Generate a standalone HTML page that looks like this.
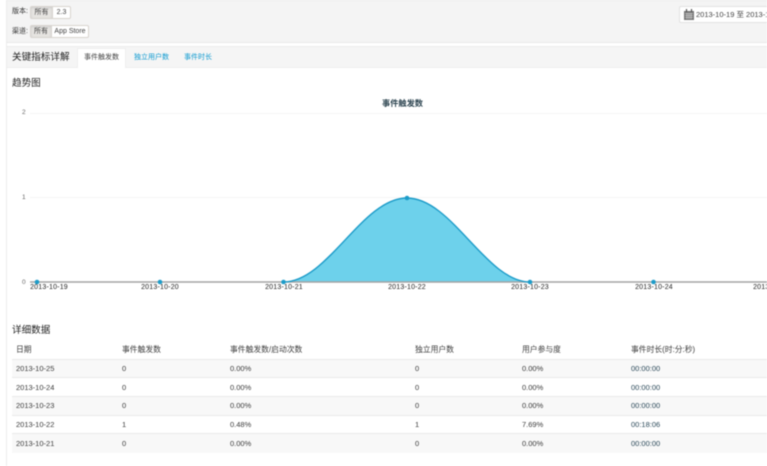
<!DOCTYPE html>
<html lang="zh">
<head>
<meta charset="utf-8">
<style>
html,body{margin:0;padding:0;background:#fff}
#p{position:relative;width:767px;height:466px;overflow:hidden;background:#fff;font-family:"Liberation Sans","Noto Sans CJK SC",sans-serif;color:#444;filter:blur(.45px)}
#p div{position:absolute;white-space:nowrap;box-sizing:border-box}
.t{font-size:7px;line-height:10px;color:#444}
.btn{height:13px;font-size:7px;line-height:11px;text-align:center;border:1px solid #d8d4cf;color:#444}
.on{background:#e6e4e1;border-radius:2px 0 0 2px;box-shadow:inset 0 1px 2px #ccc}
.off{background:#fff;border-left:0;border-radius:0 2px 2px 0}
.row{left:12px;width:755px;height:19px;border-bottom:1px solid #eaeaea}
.s{background:#f8f8f8}
.c{font-size:7.5px;line-height:10px;color:#3c3c3c}
.h{font-size:7.8px;line-height:10px;color:#3c3c3c;top:345px}
.x{font-size:7px;line-height:9px;color:#222;top:283px;letter-spacing:.2px;transform:translateX(-50%)}
.y{font-size:6.5px;line-height:8px;color:#666;left:22px}
.ttl{left:12px;font-size:9.6px;line-height:13px;color:#222}
</style>
</head>
<body>
<div id="p">
  <div style="left:6px;top:0;width:761px;height:43px;background:#f4f4f4;border-top:1px solid #ececec;border-bottom:1px solid #e8e8e8"></div>
  <div style="left:6px;top:46px;width:761px;height:22px;background:#f5f5f5;border-top:1px solid #ececec;border-bottom:1px solid #eee"></div>
  <div style="left:6px;top:0;width:1px;height:466px;background:#ececec"></div>

  <div class="t" style="left:12px;top:7px;color:#333">版本:</div>
  <div class="btn on" style="left:30px;top:6px;width:23px">所有</div>
  <div class="btn off" style="left:53px;top:6px;width:18px">2.3</div>
  <div class="t" style="left:12px;top:26.500px;color:#333">渠道:</div>
  <div class="btn on" style="left:30px;top:25px;width:22px">所有</div>
  <div class="btn off" style="left:52px;top:25px;width:37px">App Store</div>

  <div style="left:679px;top:6px;width:100px;height:17px;background:#fff;border:1px solid #e2e2e2;border-radius:2px"></div>
  <svg style="position:absolute;left:684px;top:9px" width="10" height="11" viewBox="0 0 10 11"><path d="M0 2h10v9H0z" fill="#777"/><path d="M2.500 0v3M7.500 0v3" stroke="#555" stroke-width="1.2"/><path d="M1 4.500h8M1 6.500h8M1 8.500h8M3 4v6M5 4v6M7 4v6" stroke="#ddd" stroke-width=".6"/></svg>
  <div style="left:696px;top:9px;font-size:7.500px;line-height:11px;color:#444">2013-10-19 至 2013-10-25</div>

  <div class="ttl" style="top:51px">关键指标详解</div>
  <div style="left:77px;top:48px;width:49px;height:20px;background:#fff;border:1px solid #eee;border-bottom:0"></div>
  <div class="t" style="left:84px;top:53px;color:#444">事件触发数</div>
  <div class="t" style="left:134px;top:53px;color:#0e9ad0">独立用户数</div>
  <div class="t" style="left:184px;top:53px;color:#0e9ad0">事件时长</div>

  <div class="ttl" style="top:77px">趋势图</div>
  <div style="left:382px;top:98.500px;font-size:8.2px;line-height:10px;color:#2c4450;font-weight:bold">事件触发数</div>

  <svg style="position:absolute;left:0;top:0" width="767" height="300" viewBox="0 0 767 300">
    <path d="M30 113.500H767M30 197.500H767" stroke="#f5f5f5" stroke-width="1"/>
    <path d="M283.500 282C328 282 362 198 407 198C452 198 486 282 530 282Z" fill="#6dd1eb"/>
    <path d="M30 282H767" stroke="#a3a3a3" stroke-width="1.500"/>
    <path d="M283.500 282C328 282 362 198 407 198C452 198 486 282 530 282" fill="none" stroke="#1d9cc9" stroke-width="1.400"/>
    <g fill="#1d9cc9">
      <circle cx="37" cy="282" r="2.300"/><circle cx="160" cy="282" r="2.300"/><circle cx="283.500" cy="282" r="2.300"/>
      <circle cx="407" cy="198" r="2.300"/><circle cx="530" cy="282" r="2.300"/><circle cx="653.500" cy="282" r="2.300"/>
    </g>
  </svg>
  <div class="y" style="top:109px">2</div>
  <div class="y" style="top:194px">1</div>
  <div class="y" style="top:279px">0</div>
  <div class="x" style="left:49px">2013-10-19</div>
  <div class="x" style="left:160px">2013-10-20</div>
  <div class="x" style="left:284px">2013-10-21</div>
  <div class="x" style="left:407px">2013-10-22</div>
  <div class="x" style="left:530px">2013-10-23</div>
  <div class="x" style="left:654px">2013-10-24</div>
  <div class="x" style="left:772px">2013-10-25</div>

  <div class="ttl" style="top:324px">详细数据</div>
  <div class="h" style="left:16px">日期</div>
  <div class="h" style="left:122px">事件触发数</div>
  <div class="h" style="left:230px">事件触发数/启动次数</div>
  <div class="h" style="left:415px">独立用户数</div>
  <div class="h" style="left:522px">用户参与度</div>
  <div class="h" style="left:631px">事件时长(时:分:秒)</div>

  <div class="row s" style="top:359px;border-top:1px solid #eaeaea"></div>
  <div class="row" style="top:378px"></div>
  <div class="row s" style="top:397px"></div>
  <div class="row" style="top:415px"></div>
  <div class="row s" style="top:434px;border-bottom:0"></div>

  <div class="c" style="left:16px;top:364px">2013-10-25</div><div class="c" style="left:122px;top:364px">0</div><div class="c" style="left:230px;top:364px">0.00%</div><div class="c" style="left:415px;top:364px">0</div><div class="c" style="left:522px;top:364px">0.00%</div><div class="c" style="left:631px;top:364px;color:#2c4a5a">00:00:00</div>
  <div class="c" style="left:16px;top:383px">2013-10-24</div><div class="c" style="left:122px;top:383px">0</div><div class="c" style="left:230px;top:383px">0.00%</div><div class="c" style="left:415px;top:383px">0</div><div class="c" style="left:522px;top:383px">0.00%</div><div class="c" style="left:631px;top:383px;color:#2c4a5a">00:00:00</div>
  <div class="c" style="left:16px;top:401px">2013-10-23</div><div class="c" style="left:122px;top:401px">0</div><div class="c" style="left:230px;top:401px">0.00%</div><div class="c" style="left:415px;top:401px">0</div><div class="c" style="left:522px;top:401px">0.00%</div><div class="c" style="left:631px;top:401px;color:#2c4a5a">00:00:00</div>
  <div class="c" style="left:16px;top:420px">2013-10-22</div><div class="c" style="left:122px;top:420px">1</div><div class="c" style="left:230px;top:420px">0.48%</div><div class="c" style="left:415px;top:420px">1</div><div class="c" style="left:522px;top:420px">7.69%</div><div class="c" style="left:631px;top:420px;color:#2c4a5a">00:18:06</div>
  <div class="c" style="left:16px;top:439px">2013-10-21</div><div class="c" style="left:122px;top:439px">0</div><div class="c" style="left:230px;top:439px">0.00%</div><div class="c" style="left:415px;top:439px">0</div><div class="c" style="left:522px;top:439px">0.00%</div><div class="c" style="left:631px;top:439px;color:#2c4a5a">00:00:00</div>
</div>
</body>
</html>
